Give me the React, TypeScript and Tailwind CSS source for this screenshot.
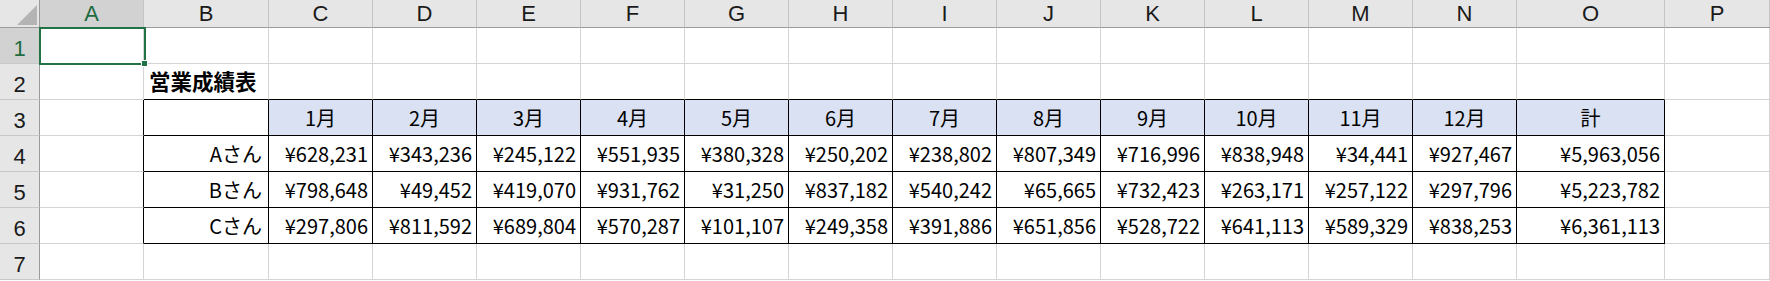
import React from "react";

const letters = "ABCDEFGHIJKLMNOP".split("");
const months = ["1月", "2月", "3月", "4月", "5月", "6月", "7月", "8月", "9月", "10月", "11月", "12月", "計"];

const people: { name: string; values: string[] }[] = [
  {
    name: "Aさん",
    values: ["628,231", "343,236", "245,122", "551,935", "380,328", "250,202", "238,802", "807,349", "716,996", "838,948", "34,441", "927,467", "5,963,056"],
  },
  {
    name: "Bさん",
    values: ["798,648", "49,452", "419,070", "931,762", "31,250", "837,182", "540,242", "65,665", "732,423", "263,171", "257,122", "297,796", "5,223,782"],
  },
  {
    name: "Cさん",
    values: ["297,806", "811,592", "689,804", "570,287", "101,107", "249,358", "391,886", "651,856", "528,722", "641,113", "589,329", "838,253", "6,361,113"],
  },
];

const font = { fontFamily: '"Noto Sans CJK JP", "Noto Sans", sans-serif' };
const headFont = { fontFamily: '"Liberation Sans", Arial, sans-serif' };

// which cell borders turn black for the B3:O6 table
function cellBorder(row: number, col: number) {
  const inTable = row >= 3 && row <= 6 && col >= 1 && col <= 14;
  const right = inTable || (row >= 3 && row <= 6 && col === 0);
  const bottom = inTable || (row === 2 && col >= 1 && col <= 14);
  return [
    "border-r border-b",
    right ? "border-r-black" : "border-r-[#d4d4d4]",
    bottom ? "border-b-black" : "border-b-[#d4d4d4]",
  ].join(" ");
}

function Cell({ row, col }: { row: number; col: number }) {
  let content: React.ReactNode = null;
  let align = "justify-end pr-[5px]";
  let bg = "bg-white";

  if (row === 2 && col === 1) {
    content = <span className="text-[21.5px] font-bold">営業成績表</span>;
    align = "justify-start pl-[5px]";
  } else if (row === 3 && col >= 2 && col <= 14) {
    content = months[col - 2];
    align = "justify-center";
    bg = "bg-[#d9e1f2]";
  } else if (row >= 4 && row <= 6 && col >= 1 && col <= 14) {
    const p = people[row - 4];
    content = col === 1 ? p.name : `¥${p.values[col - 2]}`;
    align = col === 1 ? "justify-end pr-[6px]" : "justify-end pr-[4px]";
  }

  return (
    <div className={`flex items-center text-[20px] text-black whitespace-nowrap ${align} ${bg} ${cellBorder(row, col)}`}>
      {content}
    </div>
  );
}

export default function App() {
  return (
    <div className="relative w-[1770px] h-[281px] bg-white overflow-hidden" style={font}>
      <div className="grid grid-cols-[40px_104px_125px_repeat(12,104px)_148px_1fr] grid-rows-[28px_repeat(7,36px)]">
        {/* corner */}
        <div className="relative bg-[#e6e6e6] border-r border-b border-r-[#9b9b9b] border-b-[#9b9b9b]">
          <svg className="absolute left-[17px] top-[5px]" width="20" height="20" viewBox="0 0 20 20">
            <path d="M20 0 L20 20 L0 20 Z" fill="#b4b4b4" />
          </svg>
        </div>
        {letters.map((l, i) => (
          <div
            key={l}
            className={`flex items-center justify-center border-r border-b border-r-[#c4c4c4] border-b-[#9b9b9b] text-[22px] leading-none ${
              i === 0 ? "bg-[#d2d2d2] text-[#1e6b41]" : "bg-[#e6e6e6] text-[#1a1a1a]"
            }`}
            style={headFont}
          >
            {l}
          </div>
        ))}
        {[1, 2, 3, 4, 5, 6, 7].map((r) => (
          <React.Fragment key={r}>
            <div
              className={`flex items-center justify-center pt-[7px] border-r border-b border-r-[#9b9b9b] border-b-[#c8c8c8] text-[22px] leading-none ${
                r === 1 ? "bg-[#d2d2d2] text-[#1e6b41]" : "bg-[#e6e6e6] text-[#1a1a1a]"
              }`}
              style={headFont}
            >
              {r}
            </div>
            {letters.map((_, c) => (
              <Cell key={c} row={r} col={c} />
            ))}
          </React.Fragment>
        ))}
      </div>

      {/* active cell A1 */}
      <div className="absolute left-[39px] top-[27px] w-[107px] h-[38px] border-2 border-[#217346] pointer-events-none" />
      <div className="absolute left-[141px] top-[60px] w-[7px] h-[7px] bg-[#217346] border border-white pointer-events-none" />
    </div>
  );
}
